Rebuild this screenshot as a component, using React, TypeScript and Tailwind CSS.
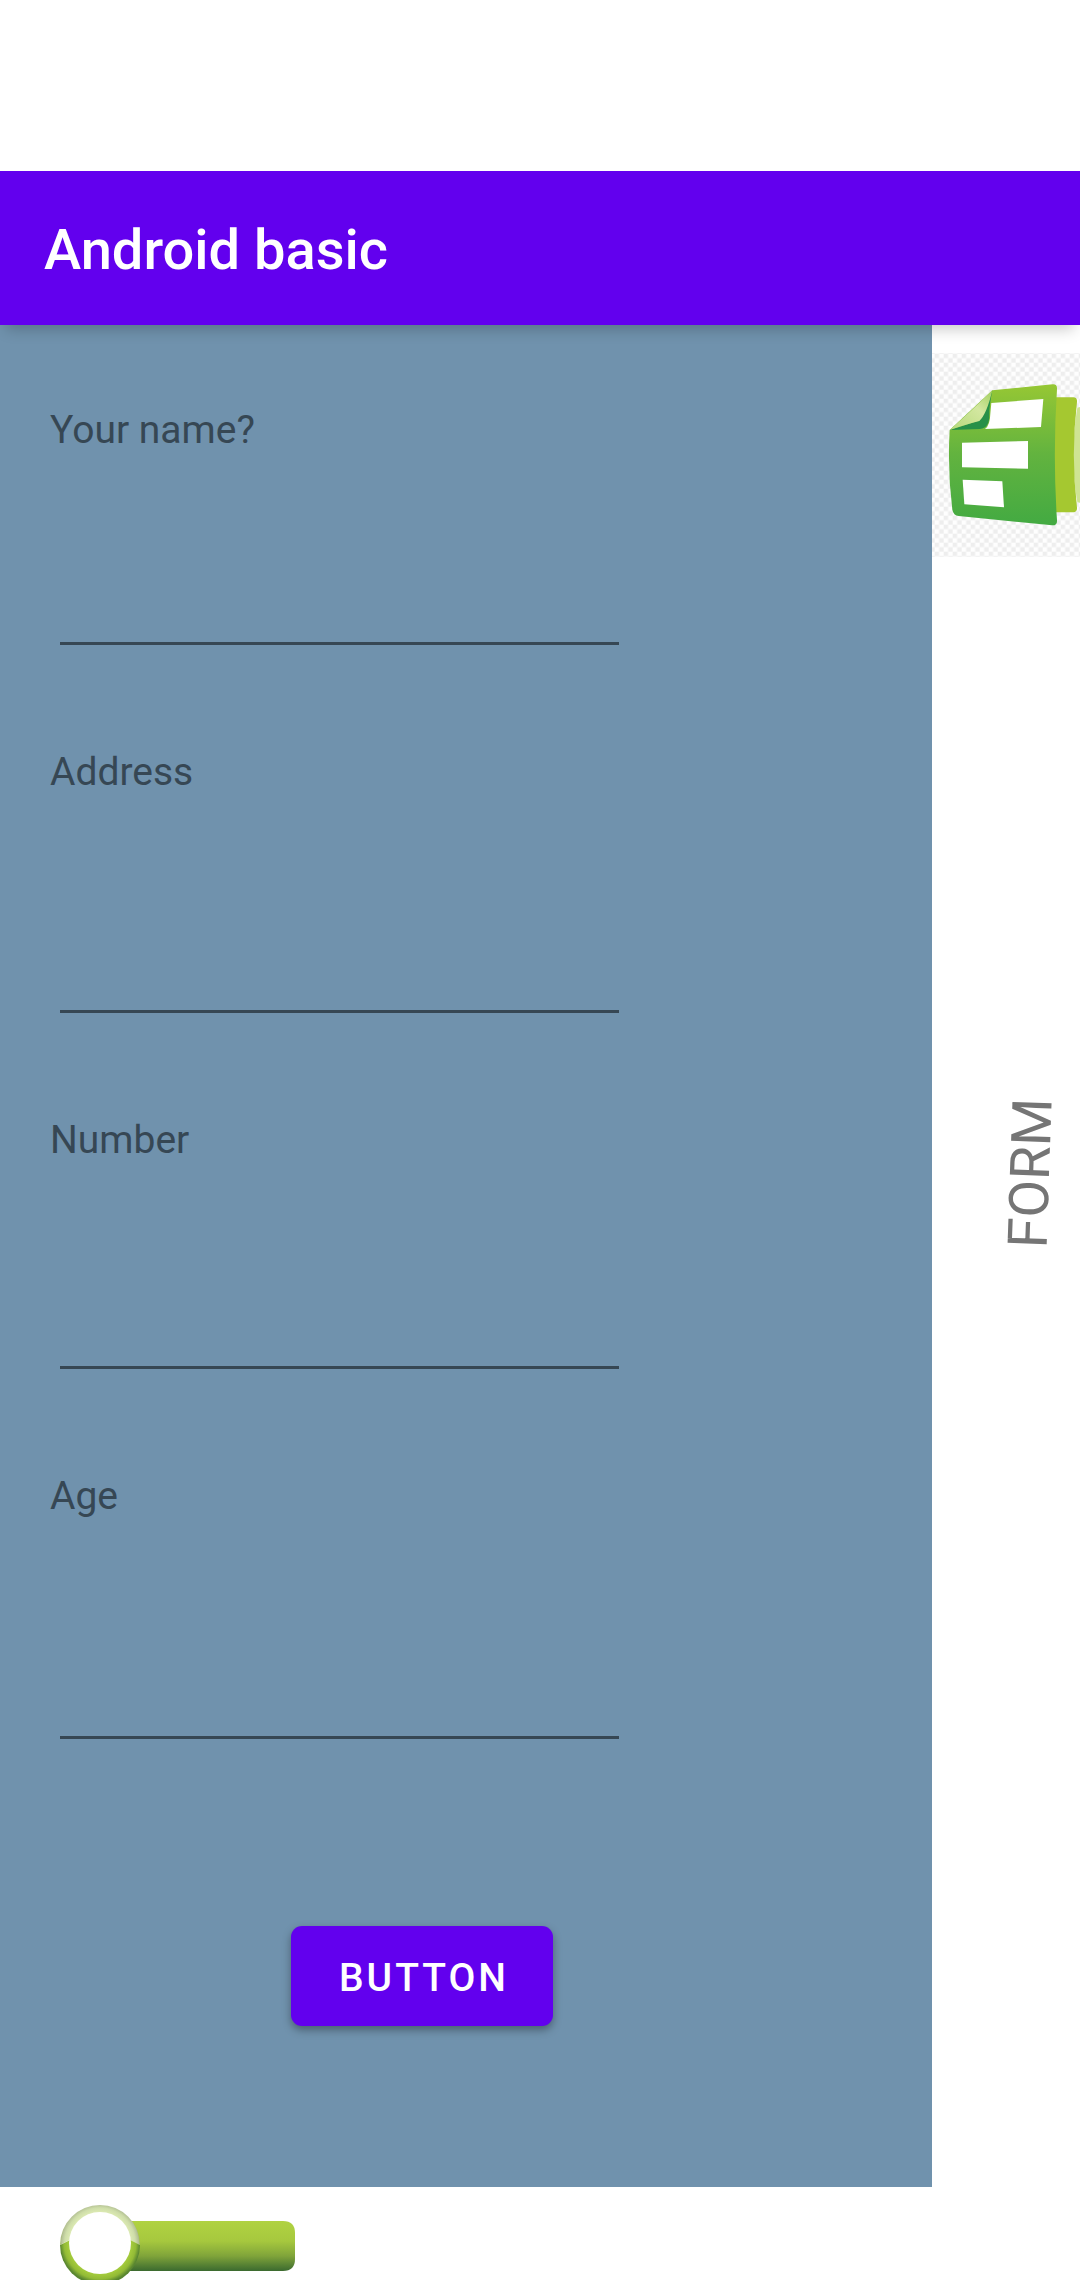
import React from "react";

const fields = [
  { id: "name", label: "Your name?", type: "text", height: "h-[189px]" },
  { id: "address", label: "Address", type: "text", height: "h-[215px]" },
  { id: "number", label: "Number", type: "tel", height: "h-[203px]" },
  { id: "age", label: "Age", type: "text", height: "h-[217px]" },
];

function FormLogo() {
  return (
    <svg viewBox="36 128 444 612" className="block h-[204px] w-[148px]" role="img" aria-label="Form logo">
      <defs>
        <pattern id="checker" x="44" y="130" width="27" height="27" patternUnits="userSpaceOnUse">
          <rect width="27" height="27" fill="#fefefe" />
          <rect x="0" y="0" width="13.5" height="13.5" fill="#eeeeee" />
          <rect x="13.5" y="13.5" width="13.5" height="13.5" fill="#eeeeee" />
        </pattern>
        <linearGradient id="sheet" x1="0" y1="0" x2="0" y2="1">
          <stop offset="0" stopColor="#96c734" />
          <stop offset="0.5" stopColor="#62b33f" />
          <stop offset="1" stopColor="#43aa42" />
        </linearGradient>
        <linearGradient id="fold" x1="0" y1="1" x2="1" y2="0">
          <stop offset="0" stopColor="#b5d97a" />
          <stop offset="0.6" stopColor="#d3e7a0" />
          <stop offset="1" stopColor="#a3cf60" />
        </linearGradient>
      </defs>
      <rect x="36" y="128" width="444" height="612" fill="url(#checker)" />
      <path d="M480 290 L472 292 Q448 434 472 576 L480 577 Z" fill="#cfe493" />
      <path d="M400 261 L460 261 Q472 262 471 274 Q452 434 471 592 Q472 605 460 606 L400 606 Z" fill="#a5c830" />
      <path d="M217 240 L398 222 Q412 221 411 236 Q398 434 411 630 Q412 646 396 645 L116 617 Q100 615 97 598 Q82 480 89 359 Z" fill="url(#sheet)" />
      <path d="M214 278 L370 266 L363 350 L195 356 Q210 345 211 310 Z" fill="#fff" />
      <path d="M126 397 L324 392 L324 475 L126 471 Z" fill="#fff" />
      <path d="M128 508 L247 513 L252 591 L133 582 Z" fill="#fff" />
      <path d="M217 240 Q207 290 208 315 Q208 354 180 356 L89 359 L176 331 Z" fill="#279048" />
      <path d="M217 240 Q200 312 178 332 Q140 342 89 359 Q160 297 217 240 Z" fill="url(#fold)" />
    </svg>
  );
}

function SwitchArt() {
  return (
    <svg viewBox="0 0 240 82" className="block h-[82px] w-[240px]" aria-hidden="true">
      <defs>
        <linearGradient id="track" x1="0" y1="0" x2="0" y2="1">
          <stop offset="0" stopColor="#b0d241" />
          <stop offset="0.4" stopColor="#a6c83e" />
          <stop offset="0.7" stopColor="#80a43a" />
          <stop offset="1" stopColor="#3b6a2f" />
        </linearGradient>
        <radialGradient id="ring" gradientUnits="userSpaceOnUse" cx="40" cy="41" r="40">
          <stop offset="0.78" stopColor="#a4cb3c" />
          <stop offset="0.9" stopColor="#93bb36" />
          <stop offset="1" stopColor="#5a8730" />
        </radialGradient>
        <radialGradient id="gloss" gradientUnits="userSpaceOnUse" cx="40" cy="41" r="40">
          <stop offset="0.78" stopColor="#dbe9b2" />
          <stop offset="0.88" stopColor="#cedda9" />
          <stop offset="0.96" stopColor="#b5c295" />
          <stop offset="1" stopColor="#9fb562" />
        </radialGradient>
      </defs>
      <path d="M60 19 H223 Q235 19 235 31 V57 Q235 69 223 69 H60 Z" fill="url(#track)" />
      <path d="M0 43 A40 40 0 0 0 80 43 L70 38 H10 Z" fill="url(#ring)" />
      <path d="M0 43 A40 40 0 1 1 80 43 L70 38 H10 Z" fill="url(#gloss)" />
      <circle cx="40" cy="41" r="31" fill="#fff" />
    </svg>
  );
}

export default function App() {
  return (
    <div className="flex min-h-screen flex-col bg-white font-['Roboto',sans-serif]">
      <header className="relative z-10 mt-[171px] flex h-[154px] items-center bg-[#6200ee] px-11 pt-1 shadow-[0_10px_14px_-6px_rgba(0,0,0,0.22)]">
        <h1 className="text-[56px] leading-[64px] font-medium text-white">Android basic</h1>
      </header>

      <main className="flex">
        <form className="flex-1 bg-[#7092ad] pt-[79px] pb-[161px]" onSubmit={(e) => e.preventDefault()}>
          <div className="flex flex-col gap-[101px]">
            {fields.map((field) => (
              <div key={field.id} className="flex flex-col">
                <label htmlFor={field.id} className="ml-[50px] self-start text-[39px] leading-[52px] text-[#364754]">
                  {field.label}
                </label>
                <input
                  id={field.id}
                  type={field.type}
                  className={`${field.height} ml-[60px] w-3/5 border-b-3 border-[#364754] bg-transparent pt-20 text-[48px] text-[#1f2a33] outline-none`}
                />
              </div>
            ))}
          </div>
          <button
            type="submit"
            className="mt-[187px] ml-[291px] block h-[100px] rounded-[11px] bg-[#6200ee] pt-1 pr-11 pl-12 text-[39px] leading-[52px] font-medium tracking-[3px] text-white uppercase shadow-[0_4px_8px_rgba(0,0,0,0.35)]"
          >
            Button
          </button>
        </form>

        <aside className="w-[148px] overflow-hidden pt-7">
          <FormLogo />
          <div className="mt-[584px] flex justify-center pl-12">
            <p className="shrink-0 -rotate-88 text-[55px] leading-[64px] text-[#757575]">FORM</p>
          </div>
        </aside>
      </main>

      <button type="button" role="switch" aria-checked="false" aria-label="Toggle" className="mt-[15px] ml-[60px] self-start">
        <SwitchArt />
      </button>
    </div>
  );
}
